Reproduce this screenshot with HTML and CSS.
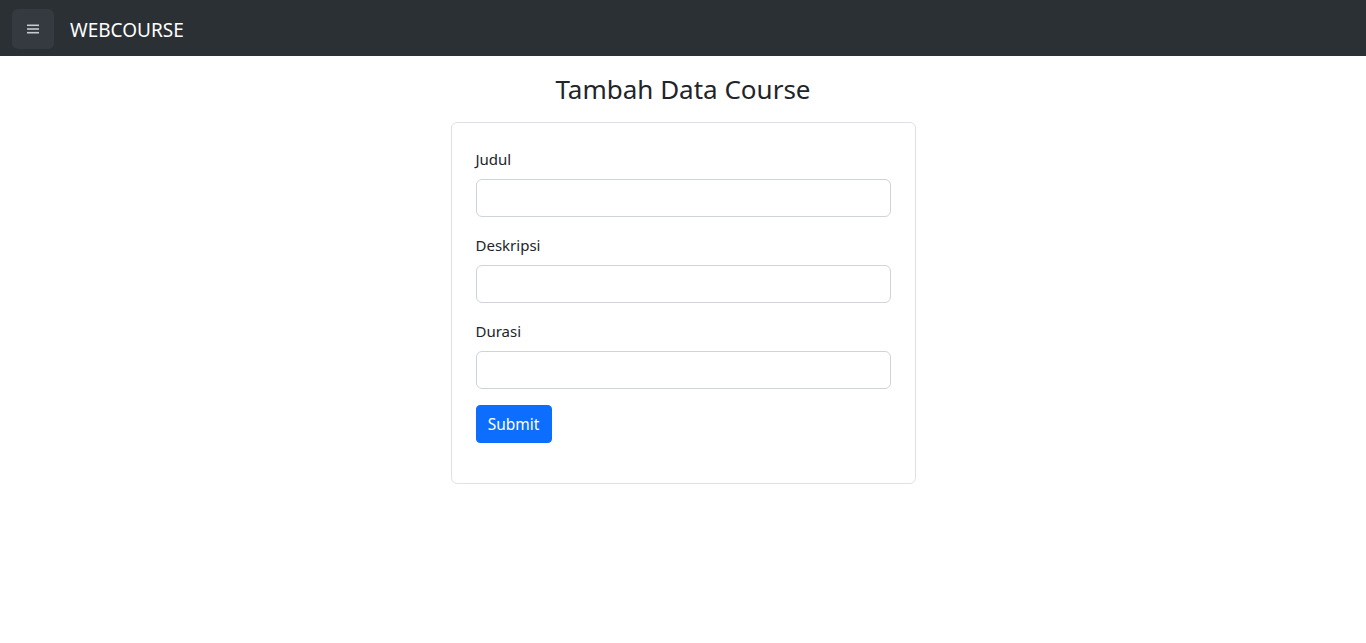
FILE: index.html
```html
<!DOCTYPE html>
<html lang="id">
<head>
<meta charset="utf-8">
<title>Tambah Data Course</title>
<link rel="stylesheet" href="styles.css">
</head>
<body>
<nav class="navbar">
  <button class="toggler" type="button" aria-label="Menu">
    <svg width="12" height="10" viewBox="0 0 12 10"><rect x="0" y="0.5" width="12" height="1.6" fill="#c8cacc"/><rect x="0" y="4.2" width="12" height="1.6" fill="#c8cacc"/><rect x="0" y="7.9" width="12" height="1.6" fill="#c8cacc"/></svg>
  </button>
  <a class="brand" href="#">WEBCOURSE</a>
</nav>
<main class="container">
  <h3 class="title">Tambah Data Course</h3>
  <div class="card">
    <form class="form">
      <div class="field">
        <label for="judul">Judul</label>
        <input id="judul" type="text">
      </div>
      <div class="field">
        <label for="deskripsi">Deskripsi</label>
        <input id="deskripsi" type="text">
      </div>
      <div class="field">
        <label for="durasi">Durasi</label>
        <input id="durasi" type="text">
      </div>
      <div class="field">
        <button class="btn" type="submit">Submit</button>
      </div>
    </form>
  </div>
</main>
</body>
</html>
```

FILE: styles.css
```css
* { box-sizing: border-box; }
html, body { margin: 0; padding: 0; }
body {
  font-family: "Noto Sans", "Open Sans", sans-serif;
  font-size: 15px;
  line-height: 24px;
  color: #212529;
  background: #fff;
}
.navbar {
  height: 56px;
  background: #2b3035;
  display: flex;
  align-items: center;
  padding: 0 12px;
}
.toggler {
  width: 42px;
  height: 40px;
  border: none;
  border-radius: 6px;
  background: #343a40;
  display: flex;
  align-items: center;
  justify-content: center;
  padding: 0;
  margin-right: 16px;
  margin-top: 1px;
}
.toggler svg { display: block; }
.brand {
  color: #fff;
  text-decoration: none;
  font-size: 19px;
  line-height: 30px;
  padding-top: 4px;
}
.container {
  display: flex;
  flex-direction: column;
  align-items: center;
}
.title {
  margin: 17px 0 15px;
  font-size: 26px;
  font-weight: 400;
  line-height: 33.6px;
}
.card {
  width: 465px;
  border: 1px solid #dee2e6;
  border-radius: 6px;
  padding: 24px;
}
.form { display: flex; flex-direction: column; }
.field { display: flex; flex-direction: column; align-items: flex-start; margin-bottom: 16px; }
.field label { margin-bottom: 8px; }
.field input {
  width: 100%;
  height: 38px;
  border: 1px solid #ced4da;
  border-radius: 6px;
  padding: 6px 12px;
  font: inherit;
}
.btn {
  height: 38px;
  width: 76px;
  padding: 0;
  background: #0d6efd;
  color: #fff;
  border: 1px solid #0d6efd;
  border-radius: 4px;
  font: inherit;
  font-size: 15.5px;
}
```
